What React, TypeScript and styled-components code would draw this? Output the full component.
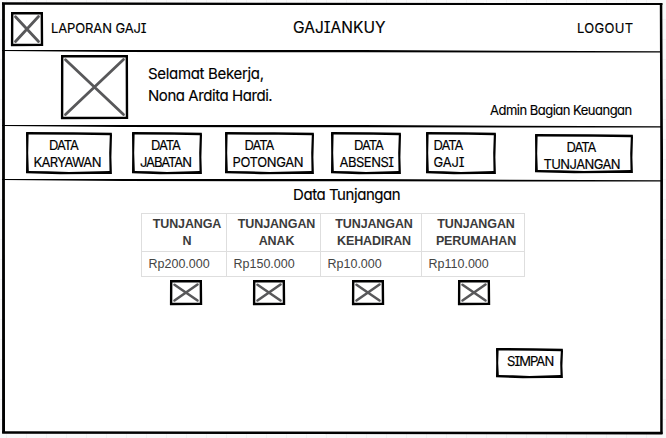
import React from 'react';
import styled, { createGlobalStyle } from 'styled-components';

const GlobalStyle = createGlobalStyle`
  * { box-sizing: border-box; }
  body {
    margin: 0;
    background-color: #f9f9fa;
    background-image:
      linear-gradient(90deg, #f1f1f3 1px, transparent 1px),
      linear-gradient(#f1f1f3 1px, transparent 1px);
    background-size: 20px 20px;
    background-position: 6px 0, 0 19px;
    overflow: hidden;
  }
`;

const Page = styled.div`
  width: 666px;
  height: 438px;
  padding: 4px 5px 5px 3px;
`;

const Sheet = styled.main`
  position: relative;
  display: grid;
  grid-template-rows: 47px 75px 54px 1fr;
  width: 658px;
  height: 429px;
  background: #fff;
  color: #000;
  font-family: Inter, "Liberation Sans", sans-serif;
  font-weight: 400;
  font-feature-settings: "cv11", "cv08";
`;

const Overlay = styled.svg`
  position: absolute;
  top: 0;
  left: 0;
  overflow: visible;
  pointer-events: none;
`;

const Label = styled.span<{ $size?: number; $track?: number; $height?: number; $indent?: number }>`
  display: block;
  white-space: pre;
  font-size: ${p => p.$size ?? 13}px;
  letter-spacing: ${p => p.$track ?? 0}px;
  line-height: ${p => p.$height ?? 16.6}px;
  padding-left: ${p => p.$indent ?? 0}px;
  -webkit-text-stroke: 0.15px #000;
`;

const Header = styled.header`
  display: grid;
  grid-template-columns: 40px 242px 1fr 84px;
  align-items: center;
  padding: 2px 0 0 8px;
`;

const Profile = styled.section`
  display: grid;
  grid-template-columns: 87px 342px 1fr;
  padding: 4px 0 0 58px;
`;

const Greeting = styled.div`
  padding-top: 8px;
`;

const Role = styled.div`
  padding-top: 47px;
`;

const Nav = styled.nav`
  display: flex;
  align-items: flex-start;
  padding-top: 6px;
`;

const SketchButton = styled.button<{ $w: number; $h: number; $left?: number; $top?: number }>`
  position: relative;
  flex: none;
  width: ${p => p.$w}px;
  height: ${p => p.$h}px;
  margin: ${p => p.$top ?? 0}px 0 0 ${p => p.$left ?? 0}px;
  padding: 5px 0 0;
  display: flex;
  flex-direction: column;
  justify-content: flex-start;
  align-items: flex-start;
  border: 0;
  background: transparent;
  color: inherit;
  font: inherit;
  font-feature-settings: inherit;
  text-align: left;
`;

const Content = styled.section`
  padding-top: 6px;
`;

const Heading = styled.h1`
  margin: 0 0 0 290px;
  font-weight: inherit;
`;

const Table = styled.table`
  width: 383px;
  margin: 9px 0 0 138px;
  border-collapse: collapse;
  table-layout: fixed;
  color: #444;
  font: 12.5px/17px "Liberation Sans", Arial, sans-serif;
`;

const Th = styled.th`
  height: 38px;
  padding: 1px 0 0 6px;
  border: 1px solid #dedede;
  color: #3b3b3b;
  font-weight: bold;
  letter-spacing: -0.12px;
  vertical-align: middle;
`;

const Td = styled.td`
  height: 25px;
  padding: 1px 0 0 6.5px;
  border: 1px solid #dedede;
`;

const Actions = styled.div`
  display: grid;
  grid-template-columns: 83px 99px 106px 32px;
  margin: 3px 0 0 167px;
`;

const Drawing = styled.svg`
  display: block;
  overflow: visible;
`;

const Footer = styled.footer`
  padding: 43px 0 0 493px;
`;

function Placeholder({ w, h, cross = 2.8 }: { w: number; h: number; cross?: number }) {
  return (
    <Drawing width={w} height={h} fill="none">
      <path d={`M1.2 1.3L${w - 1.2} 1.1L${w - 1} ${h - 1.3}L1.1 ${h - 1}Z`} stroke="#000" strokeWidth="2.4" />
      <path
        d={`M4.5 4.8L${w - 4.5} ${h - 4.5}M${w - 4.5} 4.5L4.5 ${h - 4.5}`}
        stroke="#58585a"
        strokeWidth={cross}
        strokeLinecap="round"
      />
    </Drawing>
  );
}

function RoughFrame({ w, h }: { w: number; h: number }) {
  return (
    <Overlay width={w} height={h} aria-hidden="true">
      <path
        fillRule="evenodd"
        d={`M.3 0L${w * 0.55} .3L${w - 0.2} .7L${w} 3L${w - 0.6} ${h * 0.6}L${w - 0.1} ${h}L${w * 0.78} ${h}L${w * 0.4} ${h + 0.2}L0 ${h - 0.7}L.2 ${h * 0.5}L0 .4Z
        M2.6 2.5L2.2 ${h * 0.5}L2.8 ${h - 3}L${w * 0.25} ${h - 2.7}L${w * 0.5} ${h - 2}L${w - 2.5} ${h - 3}L${w - 2.8} ${h * 0.5}L${w - 2.2} 3.2L${w * 0.6} 2.8Z`}
      />
    </Overlay>
  );
}

type Line = { text: string; track: number; indent: number };
type Item = { w: number; h: number; left: number; top?: number; lines: Line[] };

const items: Item[] = [
  { w: 86, h: 42, left: 23, lines: [{ text: 'DATA', track: -1, indent: 23 }, { text: 'KARYAWAN', track: -0.68, indent: 7.5 }] },
  { w: 70, h: 42, left: 20, lines: [{ text: 'DATA', track: -1, indent: 19 }, { text: 'JABATAN', track: -1.1, indent: 8 }] },
  { w: 89, h: 42, left: 23, lines: [{ text: 'DATA', track: -1, indent: 19.5 }, { text: 'POTONGAN', track: -0.38, indent: 7.5 }] },
  { w: 70, h: 42, left: 17, lines: [{ text: 'DATA', track: -1, indent: 23 }, { text: 'ABSENSI', track: -0.5, indent: 8.5 }] },
  { w: 70, h: 42, left: 25, lines: [{ text: 'DATA', track: -1, indent: 7.5 }, { text: 'GAJI', track: -0.2, indent: 7.5 }] },
  { w: 98, h: 39, left: 39, top: 2, lines: [{ text: 'DATA', track: -1, indent: 31.5 }, { text: 'TUNJANGAN', track: -0.6, indent: 8.5 }] },
];

export default function App() {
  return (
    <>
      <GlobalStyle />
      <Page>
        <Sheet>
          <Header>
            <Placeholder w={32} h={34} />
            <Label $track={-0.12}>LAPORAN GAJI</Label>
            <Label $size={15.5}>GAJIANKUY</Label>
            <Label $track={0.3}>LOGOUT</Label>
          </Header>
          <Profile>
            <Placeholder w={67} h={64} />
            <Greeting>
              <Label $size={15} $height={22.3} $track={-0.32}>Selamat Bekerja,</Label>
              <Label $size={15} $height={22.3} $track={-0.44}>Nona Ardita Hardi.</Label>
            </Greeting>
            <Role>
              <Label $track={-0.51}>Admin Bagian Keuangan</Label>
            </Role>
          </Profile>
          <Nav>
            {items.map(({ w, h, left, top, lines }) => (
              <SketchButton key={lines[1].text} $w={w} $h={h} $left={left} $top={top}>
                <RoughFrame w={w} h={h} />
                {lines.map(l => (
                  <Label key={l.text} $track={l.track} $indent={l.indent}>{l.text}</Label>
                ))}
              </SketchButton>
            ))}
          </Nav>
          <Content>
            <Heading><Label $size={15} $height={18} $track={-0.44}>Data Tunjangan</Label></Heading>
            <Table>
              <colgroup>
                <col width="85" /><col width="94" /><col width="101" /><col width="103" />
              </colgroup>
              <thead>
                <tr>
                  <Th>TUNJANGA<br />N</Th>
                  <Th>TUNJANGAN<br />ANAK</Th>
                  <Th>TUNJANGAN<br />KEHADIRAN</Th>
                  <Th>TUNJANGAN<br />PERUMAHAN</Th>
                </tr>
              </thead>
              <tbody>
                <tr><Td>Rp200.000</Td><Td>Rp150.000</Td><Td>Rp10.000</Td><Td>Rp110.000</Td></tr>
              </tbody>
            </Table>
            <Actions>
              {[0, 1, 2, 3].map(i => <Placeholder key={i} w={32} h={25} cross={2.6} />)}
            </Actions>
            <Footer>
              <SketchButton $w={67} $h={30}>
                <RoughFrame w={67} h={30} />
                <Label $track={-0.95} $indent={11}>SIMPAN</Label>
              </SketchButton>
            </Footer>
          </Content>
          <Overlay width="658" height="429" aria-hidden="true">
            <path d="M-1 -1.7L270 -1.2L659.5 -.9L659.4 1.1L300 1.1L-1 .8Z" />
            <path d="M-.9 -1.5L1.9 -1L1.9 200L2 428L-.9 429Z" />
            <path d="M656.8 -.8L659.3 -.5L660 150L659.7 430L657.2 430L657.3 150Z" />
            <path d="M-.9 427.2L200 427.6L659.5 427.8L659.5 430.4L300 430.1L-.9 429.8Z" />
            <path d="M-1 46L120 46L360 46.1L659 47.3V48.6L360 48.3L120 48L-1 47.1Z" />
            <path d="M-1 121L120 121L360 121.1L659 122.3V123.6L360 123.3L120 123L-1 122.1Z" />
            <path d="M-1 175L120 175L360 175.1L659 176.3V177.6L360 177.3L120 177L-1 176.1Z" />
          </Overlay>
        </Sheet>
      </Page>
    </>
  );
}
